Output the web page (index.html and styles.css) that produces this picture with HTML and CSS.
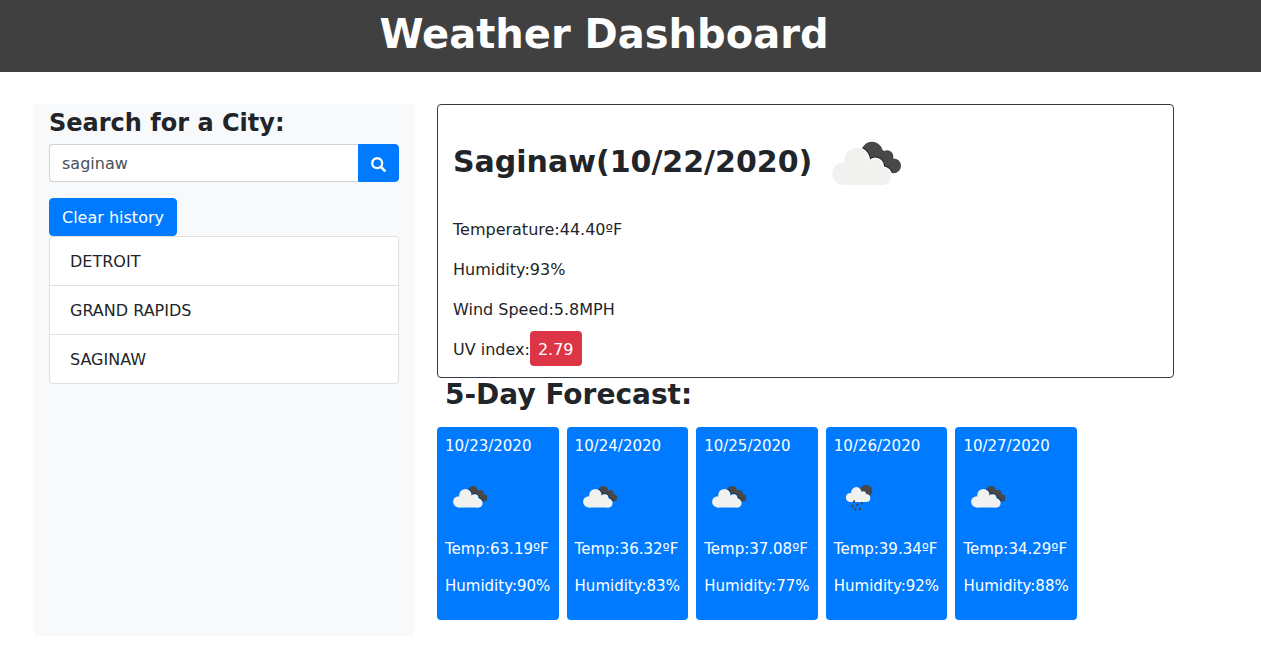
FILE: index.html
```html
<!DOCTYPE html>
<html lang="en">
<head>
<meta charset="utf-8">
<meta name="viewport" content="width=device-width, initial-scale=1">
<title>Weather Dashboard</title>
<link rel="stylesheet" href="styles.css">
</head>
<body>
<svg class="sprite" aria-hidden="true">
  <defs>
    <g id="cloud-shape">
      <circle cx="27.5" cy="61.7" r="11.3"/>
      <circle cx="40.7" cy="48.3" r="12.3"/>
      <circle cx="59.3" cy="54.2" r="7.6"/>
      <circle cx="66.4" cy="64.1" r="8.9"/>
      <rect x="27" y="54" width="40" height="19"/>
    </g>
    <g id="rain-cloud-shape">
      <circle cx="32.7" cy="53" r="9"/>
      <circle cx="44.7" cy="42.7" r="10.5"/>
      <circle cx="58" cy="47" r="6.5"/>
      <circle cx="64.5" cy="54" r="8"/>
      <rect x="33" y="46" width="31" height="16"/>
    </g>
    <mask id="cloud-gap" maskUnits="userSpaceOnUse" x="0" y="0" width="100" height="100">
      <rect width="100" height="100" fill="#fff"/>
      <use href="#cloud-shape" fill="#000" stroke="#000" stroke-width="2"/>
    </mask>
    <clipPath id="back-clouds">
      <circle cx="56" cy="40.5" r="10.7"/>
      <circle cx="71" cy="44.6" r="6.4"/>
      <circle cx="77.6" cy="53.8" r="7.4"/>
      <path d="M60 34L70 40L77 48L76 60L62 58L54 44Z"/>
    </clipPath>
    <clipPath id="back-moon"><circle cx="64" cy="40" r="12.7"/></clipPath>
    <symbol id="icon-clouds" viewBox="0 0 100 100">
      <g mask="url(#cloud-gap)"><g clip-path="url(#back-clouds)">
        <rect width="100" height="100" fill="#48484a"/>
        <use href="#cloud-shape" fill="#222" stroke="#222" stroke-width="4"/>
      </g></g>
      <use href="#cloud-shape" fill="#f1f1f0"/>
    </symbol>
    <symbol id="icon-rain" viewBox="0 0 100 100">
      <g clip-path="url(#back-moon)">
        <rect width="100" height="100" fill="#48484a"/>
        <use href="#rain-cloud-shape" fill="#333" stroke="#333" stroke-width="2"/>
      </g>
      <use href="#rain-cloud-shape" fill="#f1f1f0"/>
      <path d="M40.500 60l-1 2M37 69.500l-1 2M47 66.500l-1 2M43 75l-1 2M52.500 74.500l-1 2M56 64l-.5 1" stroke="#48484a" stroke-width="3.600" stroke-linecap="round"/>
    </symbol>
  </defs>
</svg>

<header class="site-header">
  <h1 class="site-title">Weather Dashboard</h1>
</header>

<main class="layout">
  <aside class="sidebar">
    <h2 class="sidebar-title"><label for="city">Search for a City:</label></h2>
    <form class="search">
      <input class="search-input" id="city" type="text" value="saginaw">
      <button class="btn search-btn" type="button" aria-label="Search">
        <svg class="search-icon" viewBox="0 0 16 16" aria-hidden="true"><circle cx="6.6" cy="6.600" r="5.300" fill="none" stroke="currentColor" stroke-width="2.500"/><path d="M10.800 10.800L14.500 14.500" stroke="currentColor" stroke-width="2.900" stroke-linecap="round"/></svg>
      </button>
    </form>
    <button class="btn" type="button">Clear history</button>
    <ul class="history">
      <li class="history-item">DETROIT</li>
      <li class="history-item">GRAND RAPIDS</li>
      <li class="history-item">SAGINAW</li>
    </ul>
  </aside>

  <div class="content">
    <section class="current">
      <div class="current-head">
        <h2 class="section-title city-title">Saginaw(10/22/2020)</h2>
        <svg class="current-icon" role="img" aria-label="Broken clouds"><use href="#icon-clouds"/></svg>
      </div>
      <p class="reading">Temperature:44.40ºF</p>
      <p class="reading">Humidity:93%</p>
      <p class="reading">Wind Speed:5.8MPH</p>
      <p class="reading">UV index:<span class="uv">2.79</span></p>
    </section>

    <h2 class="section-title forecast-title">5-Day Forecast:</h2>
    <div class="forecast">
      <article class="day">
        <p class="day-line">10/23/2020</p>
        <svg class="day-icon" role="img" aria-label="Broken clouds"><use href="#icon-clouds"/></svg>
        <p class="day-line">Temp:63.19ºF</p>
        <p class="day-line">Humidity:90%</p>
      </article>
      <article class="day">
        <p class="day-line">10/24/2020</p>
        <svg class="day-icon" role="img" aria-label="Broken clouds"><use href="#icon-clouds"/></svg>
        <p class="day-line">Temp:36.32ºF</p>
        <p class="day-line">Humidity:83%</p>
      </article>
      <article class="day">
        <p class="day-line">10/25/2020</p>
        <svg class="day-icon" role="img" aria-label="Broken clouds"><use href="#icon-clouds"/></svg>
        <p class="day-line">Temp:37.08ºF</p>
        <p class="day-line">Humidity:77%</p>
      </article>
      <article class="day">
        <p class="day-line">10/26/2020</p>
        <svg class="day-icon" role="img" aria-label="Rain"><use href="#icon-rain"/></svg>
        <p class="day-line">Temp:39.34ºF</p>
        <p class="day-line">Humidity:92%</p>
      </article>
      <article class="day">
        <p class="day-line">10/27/2020</p>
        <svg class="day-icon" role="img" aria-label="Broken clouds"><use href="#icon-clouds"/></svg>
        <p class="day-line">Temp:34.29ºF</p>
        <p class="day-line">Humidity:88%</p>
      </article>
    </div>
  </div>
</main>
</body>
</html>
```

FILE: styles.css
```css
*, *::before, *::after { box-sizing: border-box; }

body {
  margin: 0;
  background: #fff;
  color: #212529;
  font-family: Verdana, "DejaVu Sans", sans-serif;
  font-size: 16px;
  line-height: 24px;
}

h1, h2, p, ul { margin: 0; padding: 0; }

.sprite { position: absolute; width: 0; height: 0; }

.site-header {
  padding: 10px 0 14px 34px;
  background: #404040;
  color: #fff;
}

.site-title {
  max-width: 1140px;
  font-size: 40px;
  line-height: 48px;
  text-align: center;
}

.layout {
  display: grid;
  grid-template-columns: minmax(0, 1fr) minmax(0, 2fr);
  max-width: 1140px;
  margin: 32px 0 0 34px;
}

.sidebar {
  padding: 5px 15px 16px;
  background: #f8f9fa;
}

.sidebar-title {
  margin-bottom: 6px;
  font-size: 24px;
  line-height: 29px;
}

.search { display: flex; margin-bottom: 16px; }

.search-input {
  flex: 1;
  min-width: 0;
  height: 38px;
  padding: 6px 12px;
  border: 1px solid #ced4da;
  border-right: 0;
  border-radius: 4px 0 0 4px;
  background: #fff;
  color: #495057;
  font: inherit;
}

.btn {
  display: block;
  height: 38px;
  padding: 7px 12px 5px;
  border: 1px solid #007bff;
  border-radius: 4px;
  background: #007bff;
  color: #fff;
  font: inherit;
}

.search-btn { border-radius: 0 4px 4px 0; }

.search-icon { display: block; width: 15px; height: 15px; }

.history {
  border: 1px solid #dfdfdf;
  border-radius: 4px;
  background: #fff;
  list-style: none;
}

.history-item { padding: 13px 20px 11px; }
.history-item + .history-item { border-top: 1px solid #dfdfdf; }

.content { padding: 0 0 16px 23px; }

.current {
  padding: 7px 15px 15px;
  border: 1px solid #343a40;
  border-radius: 4px;
}

.current-head {
  display: flex;
  align-items: center;
  gap: 4px;
  margin-bottom: 6px;
}

.section-title { font-size: 28px; line-height: 34px; }

.city-title { font-size: 30px; }

.current-icon { width: 100px; height: 100px; }

.reading + .reading { margin-top: 16px; }

.uv {
  padding: 9px 8px 7px;
  border-radius: 4px;
  background: #dc3545;
  color: #fff;
}

.forecast-title { margin-bottom: 15px; padding-left: 8px; }

.forecast {
  display: grid;
  grid-template-columns: repeat(5, minmax(0, 1fr));
  gap: 8px;
  max-width: 640px;
}

.day {
  padding: 9px 8px 23px;
  border-radius: 4px;
  background: #007bff;
  color: #fff;
  font-size: 15px;
  line-height: 21px;
}

.day-line + .day-line { margin-top: 16px; }

.day-icon {
  display: block;
  width: 50px;
  height: 50px;
  margin: 14px 0 18px;
}
```
